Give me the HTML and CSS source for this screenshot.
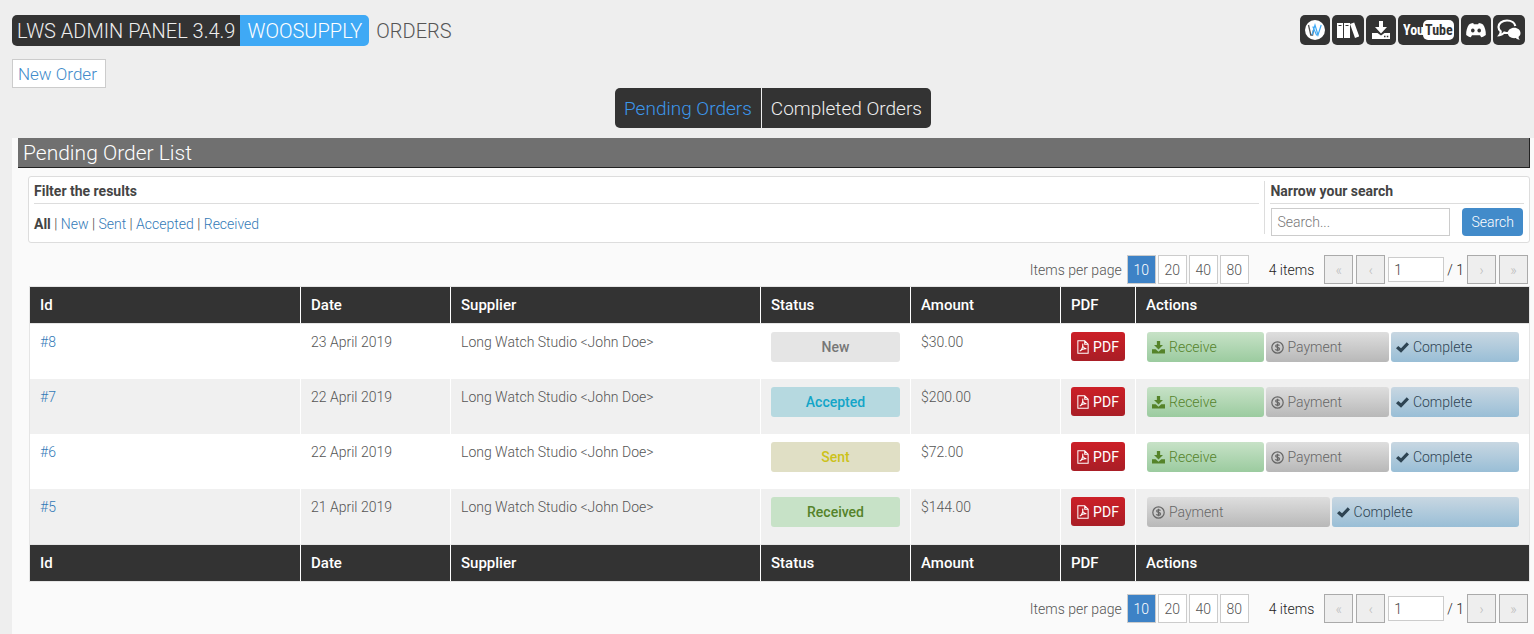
FILE: index.html
```
<!DOCTYPE html>
<html lang="en">
<head>
<meta charset="utf-8">
<title>WooSupply Orders</title>
<link rel="stylesheet" href="styles.css">
</head>
<body>
<svg class="sprite" aria-hidden="true">
  <symbol id="i-download" viewBox="0 0 16 16"><path d="M6 0h4v5h3.500L8 10.500 2.500 5H6zM0 10h4.500L8 13.300 11.500 10H16v5.500H0z"/></symbol>
  <symbol id="i-coin" viewBox="0 0 16 16"><circle cx="8" cy="8" r="7" fill="none" stroke="currentColor" stroke-width="1.500"/><path d="M10.400 5.700C10 4.900 9.200 4.600 8 4.600c-1.400 0-2.300.6-2.300 1.600C5.700 8.600 10.500 7.300 10.500 9.800c0 1-1 1.700-2.500 1.700-1.300 0-2.200-.4-2.600-1.300M8 3.400v9.200" fill="none" stroke="currentColor" stroke-width="1.500"/></symbol>
  <symbol id="i-check" viewBox="0 0 16 16"><path d="M0 8.800 2.800 6l3.400 3L13.200 1.600 16 4.400 6.200 14.600z"/></symbol>
  <symbol id="i-pdf" viewBox="0 0 14 16"><path d="M1 .8h8l4 4v10.400H1zM9 .8v4h4M3.200 12.800c2.200-1 4-5 3.600-8.600-.9 2.600.8 5.600 4.200 5.800-2.300-.4-5 .4-7.800 2.800" fill="none" stroke="currentColor" stroke-width="1.200"/></symbol>
</svg>

<header class="topbar">
  <h1 class="brand">
    <span class="brand-panel">LWS ADMIN PANEL 3.4.9</span><span class="brand-plugin">WOOSUPPLY</span><span class="brand-page">ORDERS</span>
  </h1>
  <nav class="links" aria-label="Resources">
    <a class="link" href="#" aria-label="Website"><svg width="20" height="20" viewBox="0 0 20 20"><circle cx="10" cy="10" r="10" fill="#fff"/><path d="M3.500 5 5.800 15h1.800L8.500 10" fill="none" stroke="#555" stroke-width="1.300"/><path d="M7 15 10 5l3 10L16.200 5M7.800 6.500 11.500 15H13" fill="none" stroke="#3fa9f5" stroke-width="1.200"/></svg></a>
    <a class="link" href="#" aria-label="Documentation"><svg width="22" height="18" viewBox="0 0 22 18"><path d="M0 2h6v15H0zM7 2h6v15H7zM13 3l4.200-1.600 5 14L18 17z" fill="#fff"/><path d="M1.500 4.500h3M8.500 4.500h3" stroke="#333" stroke-width="1.200"/></svg></a>
    <a class="link" href="#" aria-label="Downloads"><svg width="20" height="20" viewBox="0 0 20 20"><path d="M8 1h4v6h4l-6 6.500L4 7h4zM1 13h5.500l3.500 2.500 3.500-2.500H19v6H1z" fill="#fff"/><path d="M13 16.500h1.500M15.800 16.500h1.500" stroke="#333" stroke-width="1.400"/></svg></a>
    <a class="link" href="#" aria-label="YouTube"><svg width="51" height="22" viewBox="0 0 51 22"><rect x="20" y="1" width="31" height="20" rx="5" fill="#fff"/><text class="tube" x="0" y="16" fill="#fff">You</text><text class="tube" x="22" y="16" fill="#333">Tube</text></svg></a>
    <a class="link" href="#" aria-label="Discord"><svg width="20" height="16" viewBox="0 0 20 16"><path d="M7.200 1 7.800 2.200h4.400L12.800 1c1.700.2 3 .7 4.200 1.500C19 5.500 20 9 19.800 13c-1.500 1.300-3 2-4.600 2.300l-1.200-2H6l-1.200 2C3.200 15 1.700 14.300.2 13 0 9 1 5.500 3 2.500 4.200 1.700 5.500 1.200 7.200 1z" fill="#fff"/><ellipse cx="6.800" cy="8.600" rx="1.800" ry="2" fill="#333"/><ellipse cx="13.200" cy="8.600" rx="1.800" ry="2" fill="#333"/></svg></a>
    <a class="link link-chat" href="#" aria-label="Support chat"><svg width="24" height="22" viewBox="0 0 24 22"><path d="M11.500 13.800c-1.500.3-3 .2-4.300-.2-1.300 1.500-2.800 2.300-4.700 2.500.9-1.200 1.400-2.300 1.200-3.800C2.200 11.200 1.500 9.800 1.500 8c0-3.800 3.700-6.500 8.500-6.500 4.600 0 7.800 2.400 8.300 5.500" fill="none" stroke="#fff" stroke-width="2.200"/><path d="M17.200 8.800c3.600 0 6.300 2.300 6.300 5.200 0 1.600-.7 2.900-1.900 3.800 0 1.300.4 2.100 1.200 3-1.700-.1-3-.7-4-1.700-4.400.7-8-1.700-8-5.100 0-2.900 2.800-5.200 6.400-5.200z" fill="#fff"/></svg></a>
  </nav>
</header>

<div class="page-actions"><a class="new-order" href="#">New Order</a></div>

<nav class="tabs" aria-label="Order lists">
  <a class="tab tab-active" href="#">Pending Orders</a>
  <a class="tab" href="#">Completed Orders</a>
</nav>

<main class="panel">
  <h2 class="panel-title">Pending Order List</h2>

  <section class="filters">
    <div class="filter filter-status">
      <h3 class="filter-title">Filter the results</h3>
      <div class="filter-links"><strong>All</strong> | <a href="#">New</a> | <a href="#">Sent</a> | <a href="#">Accepted</a> | <a href="#">Received</a></div>
    </div>
    <form class="filter filter-search">
      <label class="filter-title" for="search">Narrow your search</label>
      <div class="search-row">
        <input class="search-input" id="search" type="text" placeholder="Search...">
        <button class="search-button" type="button">Search</button>
      </div>
    </form>
  </section>

  <div class="pager">
    <span class="pager-label">Items per page</span>
    <div class="sizes"><a class="size size-active" href="#">10</a><a class="size" href="#">20</a><a class="size" href="#">40</a><a class="size" href="#">80</a></div>
    <span class="count">4 items</span>
    <div class="steps">
      <button class="step" type="button" disabled aria-label="First page">«</button>
      <button class="step" type="button" disabled aria-label="Previous page">‹</button>
      <input class="page-input" type="text" value="1" aria-label="Current page">
      <span class="total">/ 1</span>
      <button class="step" type="button" disabled aria-label="Next page">›</button>
      <button class="step" type="button" disabled aria-label="Last page">»</button>
    </div>
  </div>

  <table class="orders">
    <colgroup><col><col class="col-date"><col class="col-supplier"><col class="col-status"><col class="col-amount"><col class="col-pdf"><col class="col-actions"></colgroup>
    <thead>
      <tr><th>Id</th><th>Date</th><th>Supplier</th><th>Status</th><th>Amount</th><th>PDF</th><th>Actions</th></tr>
    </thead>
    <tbody>
      <tr>
        <td><a href="#">#8</a></td><td>23 April 2019</td><td>Long Watch Studio &lt;John Doe&gt;</td>
        <td><span class="status status-new">New</span></td><td>$30.00</td>
        <td><button class="pdf" type="button"><svg class="icon-pdf"><use href="#i-pdf"/></svg>PDF</button></td>
        <td><div class="actions"><button class="action receive" type="button"><svg class="icon"><use href="#i-download"/></svg>Receive</button><button class="action payment" type="button"><svg class="icon"><use href="#i-coin"/></svg>Payment</button><button class="action complete" type="button"><svg class="icon"><use href="#i-check"/></svg>Complete</button></div></td>
      </tr>
      <tr>
        <td><a href="#">#7</a></td><td>22 April 2019</td><td>Long Watch Studio &lt;John Doe&gt;</td>
        <td><span class="status status-accepted">Accepted</span></td><td>$200.00</td>
        <td><button class="pdf" type="button"><svg class="icon-pdf"><use href="#i-pdf"/></svg>PDF</button></td>
        <td><div class="actions"><button class="action receive" type="button"><svg class="icon"><use href="#i-download"/></svg>Receive</button><button class="action payment" type="button"><svg class="icon"><use href="#i-coin"/></svg>Payment</button><button class="action complete" type="button"><svg class="icon"><use href="#i-check"/></svg>Complete</button></div></td>
      </tr>
      <tr>
        <td><a href="#">#6</a></td><td>22 April 2019</td><td>Long Watch Studio &lt;John Doe&gt;</td>
        <td><span class="status status-sent">Sent</span></td><td>$72.00</td>
        <td><button class="pdf" type="button"><svg class="icon-pdf"><use href="#i-pdf"/></svg>PDF</button></td>
        <td><div class="actions"><button class="action receive" type="button"><svg class="icon"><use href="#i-download"/></svg>Receive</button><button class="action payment" type="button"><svg class="icon"><use href="#i-coin"/></svg>Payment</button><button class="action complete" type="button"><svg class="icon"><use href="#i-check"/></svg>Complete</button></div></td>
      </tr>
      <tr>
        <td><a href="#">#5</a></td><td>21 April 2019</td><td>Long Watch Studio &lt;John Doe&gt;</td>
        <td><span class="status status-received">Received</span></td><td>$144.00</td>
        <td><button class="pdf" type="button"><svg class="icon-pdf"><use href="#i-pdf"/></svg>PDF</button></td>
        <td><div class="actions"><button class="action payment" type="button"><svg class="icon"><use href="#i-coin"/></svg>Payment</button><button class="action complete" type="button"><svg class="icon"><use href="#i-check"/></svg>Complete</button></div></td>
      </tr>
    </tbody>
    <tfoot>
      <tr><th>Id</th><th>Date</th><th>Supplier</th><th>Status</th><th>Amount</th><th>PDF</th><th>Actions</th></tr>
    </tfoot>
  </table>

  <div class="pager">
    <span class="pager-label">Items per page</span>
    <div class="sizes"><a class="size size-active" href="#">10</a><a class="size" href="#">20</a><a class="size" href="#">40</a><a class="size" href="#">80</a></div>
    <span class="count">4 items</span>
    <div class="steps">
      <button class="step" type="button" disabled aria-label="First page">«</button>
      <button class="step" type="button" disabled aria-label="Previous page">‹</button>
      <input class="page-input" type="text" value="1" aria-label="Current page">
      <span class="total">/ 1</span>
      <button class="step" type="button" disabled aria-label="Next page">›</button>
      <button class="step" type="button" disabled aria-label="Last page">»</button>
    </div>
  </div>
</main>
</body>
</html>
```
FILE: styles.css
```
* { box-sizing: border-box; }
html { min-height: 100%; }
body {
  margin: 0;
  min-height: 100vh;
  display: flex;
  flex-direction: column;
  padding: 15px 0 0 12px;
  background: #eee;
  color: #444;
  font: 300 14px/20px Roboto, "Open Sans", sans-serif;
}
a { color: #337ab7; text-decoration: none; }
button, input { font: inherit; color: inherit; margin: 0; }
h1, h2, h3 { margin: 0; font-weight: 300; }
strong { font-weight: 700; }
.sprite { position: absolute; width: 0; height: 0; }

.topbar { display: flex; justify-content: space-between; padding-right: 9px; }
.brand { display: flex; font-size: 20px; line-height: 30px; color: #555; }
.brand span { padding: 1px 5px 0; }
.brand .brand-panel { background: #333; color: #eee; border-radius: 5px 0 0 5px; }
.brand .brand-plugin { padding: 1px 7px 0; background: #3fa9f5; color: #fff; border-radius: 0 5px 5px 0; }
.brand .brand-page { padding-left: 7px; }
.links { display: flex; gap: 2px; }
.link { display: flex; align-items: center; justify-content: center; height: 30px; padding: 0 5px; background: #333; border-radius: 5px; }
.link-chat { padding: 0 4px; }
.tube { font: 700 14px "Liberation Sans Narrow", "Roboto Condensed", Roboto, sans-serif; }

.page-actions { display: flex; margin-top: 13px; }
.new-order { padding: 1px 8px 0 5px; border: 1px solid #ccc; background: #fff; color: #428bca; font-size: 17px; line-height: 26px; }

.tabs { display: flex; justify-content: center; gap: 1px; }
.tab { padding: 1px 9px 0; background: #333; color: #eee; font-size: 19px; line-height: 39px; }
.tab:first-child { border-radius: 5px 0 0 5px; }
.tab:last-child { border-radius: 0 5px 5px 0; }
.tab-active { color: #3c96ea; }

.panel { flex: 1; margin-top: 10px; padding: 0 4px 11px 6px; background: #fafafa; }
.panel-title { padding: 1px 0 0 5px; background: #707070; color: #fff; font-size: 21px; line-height: 28px; border: solid #222; border-width: 0 1px 1px 0; }

.filters { display: flex; margin: 8px 0 0 10px; padding: 4px 5px 4px 5px; background: #fff; border: 1px solid #ddd; border-radius: 3px; }
.filter-status { flex: 1; margin-right: 5px; }
.filter-search { margin: 0 0 4px; padding-left: 5px; border-left: 1px solid #ddd; }
.filter-title { display: block; padding-bottom: 2px; border-bottom: 1px solid #ddd; font-size: 14px; line-height: 20px; font-weight: 700; }
.filter-links { padding-top: 10px; }
.search-row { display: flex; gap: 12px; padding: 4px 1px 0; height: 30px; }
.search-input { width: 179px; height: 28px; padding: 0 5px; border: 1px solid #ccc; background: #fff; }
.search-input::placeholder { color: #777; opacity: 1; }
.search-button { height: 28px; padding: 0 9px; border: 0; border-radius: 4px; background: #428bca; color: #fff; }

.pager { display: flex; justify-content: flex-end; align-items: center; margin-top: 12px; padding-right: 2px; }
.pager-label { margin-right: 5px; color: #555; }
.sizes { display: flex; gap: 2px; }
.size { width: 29px; height: 29px; border: 1px solid #ccc; background: #fff; color: #555; text-align: center; line-height: 28px; }
.size-active { background: #3d82c6; color: #fff; }
.count { margin: 0 10px 0 20px; color: #222; }
.steps { display: flex; align-items: center; gap: 3px; }
.step { width: 29px; height: 29px; padding: 0; border: 1px solid #aaa; background: #eee; color: #bbb; }
.page-input { width: 56px; height: 25px; padding: 0 5px; border: 1px solid #ccc; background: #fff; }
.total { color: #222; }

.orders { width: calc(100% - 11px); margin: 2px 0 0 11px; table-layout: fixed; border: 1px solid #e5e5e5; border-collapse: separate; border-spacing: 0; background: #fff; }
.col-date, .col-status, .col-amount { width: 150px; }
.col-supplier { width: 310px; }
.col-pdf { width: 75px; }
.col-actions { width: 394px; }
.orders th { padding: 8px 10px; background: #333; color: #fff; text-align: left; font-size: 15px; line-height: 20px; font-weight: 500; }
.orders thead th { border-bottom: 1px solid #e5e5e5; }
.orders tfoot th { border-top: 1px solid #e5e5e5; }
.orders td { height: 55px; padding: 8px 10px 0; vertical-align: top; color: #555; }
.orders th + th, .orders td + td { border-left: 1px solid #fff; }
.orders tbody tr:nth-child(even) { background: #f0f0f0; }
.status { display: block; border-radius: 3px; text-align: center; line-height: 30px; font-weight: 500; }
.status-new { background: #e5e5e5; color: #777; }
.status-accepted { background: #b6d9e0; color: #12a5c8; }
.status-sent { background: #e0dfc5; color: #ccc21a; }
.status-received { background: #c7e2c7; color: #55832a; }
.pdf { display: flex; align-items: center; justify-content: center; gap: 4px; width: 54px; height: 29px; padding: 0; border: 0; border-radius: 3px; background: linear-gradient(#cc1f27, #a91e26); color: #fff; font-weight: 400; }
.icon-pdf { width: 12px; height: 14px; }
.actions { display: flex; gap: 2px; margin-left: 1px; }
.action { flex: 1 1 auto; display: flex; align-items: center; gap: 4px; height: 30px; padding: 0 5px; border: 0; border-radius: 3px; }
.icon { width: 13px; height: 13px; fill: currentColor; }
.receive { background: linear-gradient(#c7e2c7, #9bcb9f); color: #55832a; }
.payment { background: linear-gradient(#dedede, #b8b8b8); color: #666; }
.complete { background: linear-gradient(#c8d7e2, #99bed6); color: #2e4453; }
```
